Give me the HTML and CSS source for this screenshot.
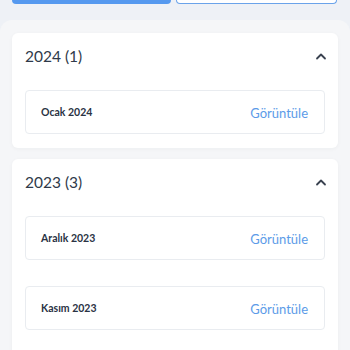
FILE: index.html
```html
<!DOCTYPE html>
<html lang="tr">
<head>
<meta charset="utf-8">
<link rel="stylesheet" href="styles.css">
</head>
<body>
<div class="tabs">
  <div class="tab tab-primary"></div>
  <div class="tab tab-outline"></div>
</div>
<div class="content">
  <section class="card">
    <div class="card-head">
      <h2 class="year">2024 (1)</h2>
      <svg class="chev" width="12" height="8" viewBox="0 0 12 8"><path d="M2 6.5 L6 2.5 L10 6.5" fill="none" stroke="#3a4250" stroke-width="1.8" stroke-linecap="round" stroke-linejoin="round"/></svg>
    </div>
    <div class="items">
      <div class="item"><span class="month">Ocak 2024</span><a class="view">Görüntüle</a></div>
    </div>
  </section>
  <section class="card card-last">
    <div class="card-head">
      <h2 class="year">2023 (3)</h2>
      <svg class="chev" width="12" height="8" viewBox="0 0 12 8"><path d="M2 6.5 L6 2.5 L10 6.5" fill="none" stroke="#3a4250" stroke-width="1.8" stroke-linecap="round" stroke-linejoin="round"/></svg>
    </div>
    <div class="items">
      <div class="item"><span class="month">Aralık 2023</span><a class="view">Görüntüle</a></div>
      <div class="item"><span class="month">Kasım 2023</span><a class="view">Görüntüle</a></div>
    </div>
  </section>
</div>
</body>
</html>
```

FILE: styles.css
```css
html, body {
  margin: 0;
  padding: 0;
  background: #eef1f6;
  font-family: Lato, "Open Sans", "Liberation Sans", sans-serif;
  overflow: hidden;
  height: 350px;
}
.tabs {
  display: flex;
  gap: 5px;
  padding: 0 13px 0 12px;
  height: 20px;
}
.tab {
  flex: 1;
  height: 5px;
  margin-top: -1px;
  border-radius: 0 0 4px 4px;
  box-sizing: border-box;
}
.tab-primary {
  background: #5599ef;
}
.tab-outline {
  background: #fff;
  border: 1.5px solid #6aa3ea;
  border-top: none;
}
.content {
  background: #f5f6f8;
  border-radius: 12px 12px 0 0;
  padding: 13px 12px 0 12px;
  display: flex;
  flex-direction: column;
  gap: 11px;
}
.card {
  background: #fff;
  border-radius: 6px;
  box-shadow: 0 1px 4px rgba(30, 40, 60, 0.04);
  padding: 0 13px 14px 13px;
}
.card-last {
  padding-bottom: 30px;
}
.card-head {
  height: 46px;
  display: flex;
  align-items: center;
  justify-content: space-between;
}
.year {
  margin: 0;
  font-size: 15.5px;
  font-weight: 400;
  color: #2f3a4a;
}
.chev {
  margin-right: -2px;
  margin-top: -1px;
}
.items {
  padding-top: 11px;
  display: flex;
  flex-direction: column;
  gap: 26px;
}
.item {
  height: 44px;
  box-sizing: border-box;
  border: 1px solid #e9ecf0;
  border-radius: 4px;
  display: flex;
  align-items: center;
  justify-content: space-between;
  padding: 0 16px 0 15px;
}
.month {
  font-size: 10.5px;
  font-weight: 700;
  color: #2a3344;
}
.view {
  font-size: 13px;
  color: #5b9be8;
  margin-top: 1px;
}
```
